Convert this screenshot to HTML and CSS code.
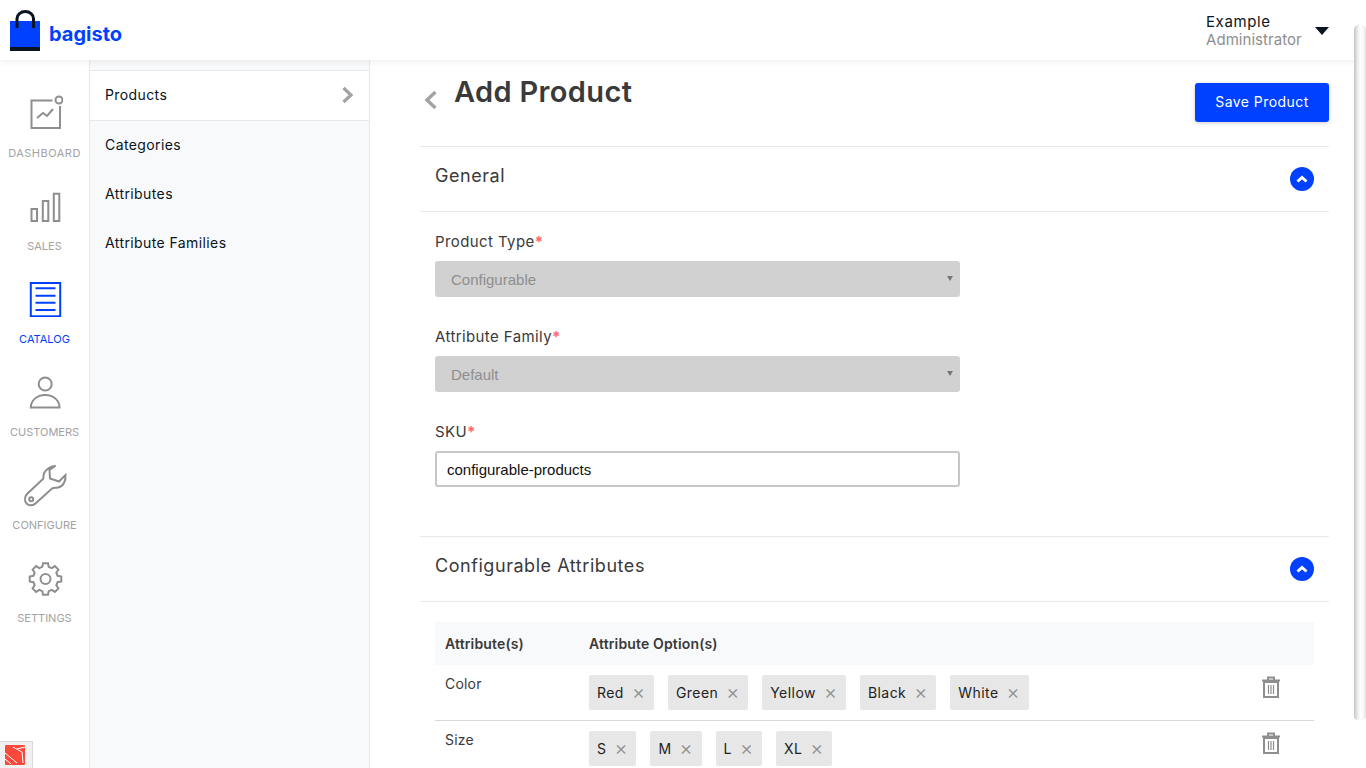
FILE: index.html
```html
<!DOCTYPE html>
<html lang="en">
<head>
<meta charset="utf-8">
<title>Add Product</title>
<link rel="stylesheet" href="styles.css">
</head>
<body>
<div class="app">
  <header class="topbar">
    <div class="brand">
      <svg class="brand-bag" width="30" height="41" viewBox="0 0 30 41"><rect x="0" y="11" width="30" height="27" fill="#0041ff"/><rect x="0" y="37" width="30" height="4" fill="#0a1420"/><path d="M7 18V8.500a8.250 7 0 0 1 16.500 0V18" fill="none" stroke="#0a1420" stroke-width="3"/></svg>
      <span class="brand-name">bagisto</span>
    </div>
    <div class="user">
      <div class="user-text"><div class="user-name">Example</div><div class="user-role">Administrator</div></div>
      <span class="caret"></span>
    </div>
  </header>
  <div class="main">
    <nav class="rail">
      <a class="rail-item">
        <svg width="36" height="36" viewBox="0 0 36 36" fill="none" stroke="#8e8e8e" stroke-width="2"><path d="M25.500 5.500H4.500V33H33V11"/><circle cx="32" cy="5" r="3.500"/><path d="M10 23l6-5 4 3 6-7"/></svg>
        <span>DASHBOARD</span>
      </a>
      <a class="rail-item">
        <svg width="36" height="36" viewBox="0 0 36 36" fill="none" stroke="#8e8e8e" stroke-width="2"><rect x="4.500" y="21" width="5.500" height="12"/><rect x="15.800" y="13" width="5.500" height="20"/><rect x="26.800" y="5.700" width="5.500" height="27.300"/></svg>
        <span>SALES</span>
      </a>
      <a class="rail-item is-active">
        <svg width="36" height="36" viewBox="0 0 36 36" fill="none" stroke="#0041ff" stroke-width="2"><rect x="3.800" y="2" width="29.400" height="33.300"/><path d="M8.500 7.300h20M8.500 14.700h20M8.500 21.700h20M8.500 29h20"/></svg>
        <span>CATALOG</span>
      </a>
      <a class="rail-item">
        <svg width="36" height="36" viewBox="0 0 36 36" fill="none" stroke="#8e8e8e" stroke-width="2"><circle cx="18.200" cy="10" r="6.500"/><path d="M3.800 33.500c0-7 6-12.500 14.400-12.500s14.300 5.500 14.300 12.500z"/></svg>
        <span>CUSTOMERS</span>
      </a>
      <a class="rail-item">
        <svg class="wrench" width="46" height="44" viewBox="0 0 46 44" fill="none" stroke="#8e8e8e" stroke-width="2"><path d="M33.500 2.700C27 3.500 21 8 21.500 14L21 16 5 31C2.500 34 2.500 38 4.500 40.500 7 43 11 43 14 40L30 25.500C32 24.500 34 25 36 24.500 41 24 44 18 43.500 12L37 18.500 28 15.500 27.500 7Z"/><circle cx="9.200" cy="36.300" r="2"/></svg>
        <span>CONFIGURE</span>
      </a>
      <a class="rail-item">
        <svg width="36" height="36" viewBox="0 0 36 36" fill="none" stroke="#8e8e8e" stroke-width="2"><g transform="translate(18.500 19)"><polygon points="-2.500,-15.800 2.500,-15.800 3.200,-12.100 6.250,-10.800 9.400,-12.900 12.900,-9.400 10.800,-6.250 12.100,-3.200 15.800,-2.500 15.800,2.500 12.100,3.200 10.800,6.250 12.900,9.400 9.400,12.900 6.250,10.800 3.200,12.100 2.500,15.800 -2.500,15.800 -3.200,12.100 -6.250,10.800 -9.400,12.900 -12.900,9.400 -10.800,6.250 -12.100,3.200 -15.800,2.500 -15.800,-2.500 -12.100,-3.200 -10.800,-6.250 -12.900,-9.400 -9.400,-12.900 -6.250,-10.800 -3.200,-12.100"/><circle r="5"/></g></svg>
        <span>SETTINGS</span>
      </a>
      <div class="debug-tab">
        <svg width="20" height="20" viewBox="0 0 20 20"><rect width="20" height="20" rx="1" fill="#f9493b"/><path d="M0 8l12 10M0 14l6 5M8 2l9 5 1 11M12 4l8-2" stroke="#fff" stroke-width="1" fill="none"/></svg>
      </div>
    </nav>
    <aside class="subnav">
      <a class="subnav-item is-current">Products<svg width="14" height="18" viewBox="0 0 14 18" fill="none" stroke="#a2a2a2" stroke-width="3.200"><path d="M2.500 2l7.500 7-7.500 7"/></svg></a>
      <a class="subnav-item">Categories</a>
      <a class="subnav-item">Attributes</a>
      <a class="subnav-item">Attribute Families</a>
    </aside>
    <main class="content">
      <div class="page-head">
        <div class="page-title">
          <svg class="back" width="14" height="20" viewBox="0 0 14 20" fill="none" stroke="#a2a2a2" stroke-width="3.400"><path d="M11.500 2L3 10l8.500 8"/></svg>
          <h1>Add Product</h1>
        </div>
        <button class="btn">Save Product</button>
      </div>

      <section class="panel">
        <div class="panel-head"><h2>General</h2><span class="toggle"><svg width="14" height="10" viewBox="0 0 14 10" fill="none" stroke="#fff" stroke-width="3"><path d="M2.500 7.500L7 3.500l4.500 4"/></svg></span></div>
        <div class="panel-body">
          <div class="field">
            <label>Product Type<em>*</em></label>
            <div class="select">Configurable<span class="select-arrow"></span></div>
          </div>
          <div class="field">
            <label>Attribute Family<em>*</em></label>
            <div class="select">Default<span class="select-arrow"></span></div>
          </div>
          <div class="field">
            <label>SKU<em>*</em></label>
            <div class="input">configurable-products</div>
          </div>
        </div>
      </section>

      <section class="panel">
        <div class="panel-head"><h2>Configurable Attributes</h2><span class="toggle"><svg width="14" height="10" viewBox="0 0 14 10" fill="none" stroke="#fff" stroke-width="3"><path d="M2.500 7.500L7 3.500l4.500 4"/></svg></span></div>
        <div class="attr-wrap">
          <div class="attr-head"><span class="col-a">Attribute(s)</span><span>Attribute Option(s)</span></div>
          <div class="attr-row">
            <span class="col-a attr-name">Color</span>
            <div class="tags">
              <span class="tag">Red<i>×</i></span><span class="tag">Green<i>×</i></span><span class="tag">Yellow<i>×</i></span><span class="tag">Black<i>×</i></span><span class="tag">White<i>×</i></span>
            </div>
            <svg class="trash" width="20" height="24" viewBox="0 0 20 24" fill="none" stroke="#8e8e8e" stroke-width="2"><path d="M1 5.500h18M7 5V2.500h6V5"/><path d="M3 7v15h14V7z"/><path d="M7.500 10v9M10 10v9M12.500 10v9" stroke-width="1.200"/></svg>
          </div>
          <div class="attr-row">
            <span class="col-a attr-name">Size</span>
            <div class="tags">
              <span class="tag">S<i>×</i></span><span class="tag">M<i>×</i></span><span class="tag">L<i>×</i></span><span class="tag">XL<i>×</i></span>
            </div>
            <svg class="trash" width="20" height="24" viewBox="0 0 20 24" fill="none" stroke="#8e8e8e" stroke-width="2"><path d="M1 5.500h18M7 5V2.500h6V5"/><path d="M3 7v15h14V7z"/><path d="M7.500 10v9M10 10v9M12.500 10v9" stroke-width="1.200"/></svg>
          </div>
        </div>
      </section>
    </main>
  </div>
  <div class="scrollbar"></div>
</div>
</body>
</html>
```
FILE: styles.css
```css
* { box-sizing: border-box; }
html, body { margin: 0; height: 100%; overflow: hidden; background: #fff; }
body { font-family: Inter, "Open Sans", sans-serif; font-size: 14px; color: #3a3a3a; }
.app { position: relative; height: 768px; display: flex; flex-direction: column; overflow: hidden; }

.topbar { flex: none; height: 60px; display: flex; justify-content: space-between; background: #fff; box-shadow: 0 3px 6px rgba(0,0,0,.05); position: relative; z-index: 2; padding: 10px 0 0 10px; }
.brand { display: flex; align-items: flex-start; gap: 9px; }
.brand-name { font-size: 20px; font-weight: 700; color: #0041ff; line-height: 20px; margin-top: 14px; }
.user { display: flex; width: 160px; padding-top: 3px; }
.user-name { font-size: 15px; line-height: 18px; color: #0a1420; letter-spacing: .6px; }
.user-role { font-size: 15px; line-height: 18px; color: #8e8e8e; letter-spacing: .05px; }
.user-text { width: 109px; }
.caret { width: 0; height: 0; margin-top: 14px; border-left: 7px solid transparent; border-right: 7px solid transparent; border-top: 8px solid #0a1420; }

.main { flex: 1; display: flex; min-height: 0; }
.rail { flex: none; width: 90px; background: #fff; border-right: 1px solid #e8e8e8; padding-top: 35px; position: relative; display: flex; flex-direction: column; }
.rail-item { height: 93px; display: flex; flex-direction: column; align-items: center; color: #a2a2a2; font-size: 11px; line-height: 14px; }
.rail-item svg { height: 36px; flex: none; }
.rail-item span { margin-top: 15px; }
.rail-item:first-child span { letter-spacing: .5px; }
.rail-item .wrench { height: 44px; margin-top: -4px; }
.rail-item .wrench + span { margin-top: 11px; }
.rail-item.is-active { color: #0041ff; }
.debug-tab { position: absolute; left: 0; bottom: 0; width: 33px; height: 27px; background: #f1f1f1; border: 1px solid #d8d8d8; border-left: 0; border-bottom: 0; padding: 3px 0 0 5px; }

.subnav { flex: none; width: 280px; background: #f8f9fa; border-right: 1px solid #e8e8e8; padding-top: 10px; }
.subnav-item { height: 49px; display: flex; align-items: center; justify-content: space-between; padding: 0 14px 2px 15px; color: #0a1420; font-size: 14px; letter-spacing: .4px; }
.subnav-item.is-current { height: 51px; background: #fff; border-top: 1px solid #e8e8e8; border-bottom: 1px solid #e8e8e8; }

.content { flex: 1; min-width: 0; padding: 0 37px 0 50px; }
.page-head { height: 86px; display: flex; justify-content: space-between; align-items: flex-start; }
.page-title { display: flex; align-items: flex-start; }
.back { margin: 30px 0 0 4px; }
h1 { margin: 13px 0 0 16px; font-size: 29px; line-height: 38px; font-weight: 600; color: #3a3a3a; letter-spacing: .35px; }
.btn { margin-top: 23px; width: 134px; height: 39px; border: 0; border-radius: 3px; padding: 0 0 2px; background: #0041ff; color: #fff; font: inherit; font-size: 14px; letter-spacing: .45px; box-shadow: 0 1px 4px rgba(0,0,0,.2); }

.panel { border-top: 1px solid #e8e8e8; }
.panel-head { height: 65px; border-bottom: 1px solid #e8e8e8; display: flex; justify-content: space-between; padding: 0 15px; }
h2 { margin: 18px 0 0; font-size: 18px; line-height: 22px; font-weight: 400; color: #3a3a3a; letter-spacing: .55px; }
.toggle { width: 24px; height: 24px; margin-top: 20px; border-radius: 50%; background: #0041ff; display: flex; align-items: center; justify-content: center; }
.panel-body { padding: 20px 15px 49px; }
.field { margin-bottom: 30px; }
.field:last-child { margin-bottom: 0; }
.field label { display: block; font-size: 15px; line-height: 19px; height: 29px; color: #3a3a3a; letter-spacing: .4px; }
.field em { color: #fc6868; font-style: normal; font-weight: 700; }
.select { position: relative; width: 525px; height: 36px; background: #d1d1d1; border-radius: 3px; padding-left: 16px; font-family: "Liberation Sans", Arial, sans-serif; font-size: 15px; line-height: 37px; color: #8e8e8e; }
.select-arrow { position: absolute; right: 7px; top: 15px; width: 0; height: 0; border-left: 3px solid transparent; border-right: 3px solid transparent; border-top: 5px solid #777; }
.input { width: 525px; height: 36px; border: 2px solid #c7c7c7; border-radius: 3px; padding-left: 10px; font-family: "Liberation Sans", Arial, sans-serif; font-size: 15px; line-height: 33px; color: #111; }

.attr-wrap { padding: 20px 15px 0; }
.attr-head { height: 43px; background: #f8f9fa; display: flex; align-items: center; font-size: 14px; font-weight: 600; color: #3a3a3a; padding-left: 10px; letter-spacing: .15px; }
.col-a { flex: none; width: 144px; }
.attr-row { height: 56px; display: flex; align-items: flex-start; padding-left: 10px; border-bottom: 1px solid #d8d8d8; position: relative; }
.attr-row:last-child { border-bottom: 0; }
.attr-name { margin-top: 10px; line-height: 18px; letter-spacing: .2px; }
.tags { display: flex; gap: 14px; margin-top: 10px; }
.tag { height: 35px; background: #e7e7e7; border-radius: 2px; padding: 0 12px 1px 8px; display: flex; align-items: center; font-size: 14px; color: #222; letter-spacing: .45px; }
.tag i { width: 10px; margin-left: 8px; text-align: center; font-style: normal; font-size: 20px; line-height: 20px; color: #8e8e8e; font-weight: 300; letter-spacing: 0; }
.trash { position: absolute; right: 33px; top: 10px; }

.scrollbar { position: absolute; z-index: 3; right: 0; top: 24px; width: 12px; height: 696px; background: linear-gradient(90deg, #c4c4c4, #ececec 30%, #fff 55%, #f4f4f4 85%, #dedede); border-radius: 6px 6px 4px 4px; }
```
